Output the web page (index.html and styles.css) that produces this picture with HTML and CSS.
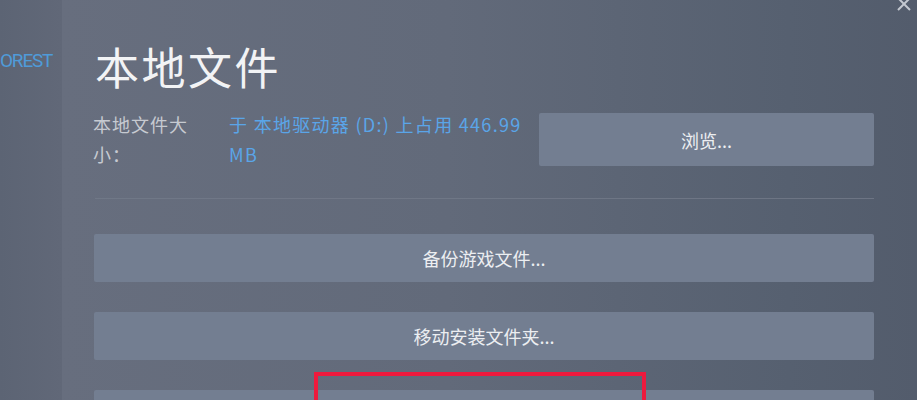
FILE: index.html
```html
<!DOCTYPE html>
<html lang="zh-CN">
<head>
<meta charset="utf-8">
<title>本地文件</title>
<link rel="stylesheet" href="styles.css">
</head>
<body>
<div class="window">
  <aside class="sidebar">
    <div class="game-name">OREST</div>
  </aside>
  <main class="panel">
    <h1 class="title">本地文件</h1>
    <div class="size-row">
      <div class="label">本地文件大小：</div>
      <div class="value">于 本地驱动器 (D:) 上占用 446.99 MB</div>
      <button class="btn btn-browse">浏览...</button>
    </div>
    <div class="divider"></div>
    <div class="actions">
      <button class="btn btn-wide">备份游戏文件...</button>
      <button class="btn btn-wide">移动安装文件夹...</button>
      <button class="btn btn-wide">&nbsp;</button>
    </div>
  </main>
  <div class="close">
    <svg width="16" height="16" viewBox="0 0 16 16"><path d="M2 -2 L14 10 M14 -2 L2 10" stroke="#c3c8d0" stroke-width="2" fill="none"/></svg>
  </div>
  <div class="highlight"></div>
</div>
</body>
</html>
```

FILE: styles.css
```css
html, body {
  margin: 0;
  padding: 0;
  width: 917px;
  height: 400px;
  overflow: hidden;
}
body {
  font-family: "Liberation Sans", "Noto Sans CJK SC", sans-serif;
  background: #5d6575;
}
.window {
  position: relative;
  display: flex;
  width: 917px;
  height: 400px;
  overflow: hidden;
}
.sidebar {
  width: 62px;
  flex: none;
  background: linear-gradient(90deg, #5c6474 0%, #616878 100%);
  overflow: hidden;
  padding-top: 50px;
  box-sizing: border-box;
}
.game-name {
  color: #4f9bd9;
  font-family: Roboto, "Liberation Sans", sans-serif;
  font-size: 19px;
  font-weight: normal;
  letter-spacing: -1.2px;
  white-space: nowrap;
  line-height: 22px;
}
.panel {
  flex: 1;
  padding: 40px 43px 0 32px;
  background: linear-gradient(90deg, #676e7e 0%, #626a7a 45%, #566070 85%, #535c6c 100%);
}
.title {
  margin: 0 0 17px 1px;
  font-family: "Noto Sans CJK SC", sans-serif;
  font-weight: normal;
  font-size: 44px;
  line-height: 52px;
  letter-spacing: 2.5px;
  color: #f2f3f5;
}
.size-row {
  display: grid;
  grid-template-columns: 100px 300px 1fr;
  column-gap: 35px;
  align-items: start;
}
.size-row .btn-browse {
  margin-left: -25px;
}
.label, .value {
  font-family: "Noto Sans CJK SC", sans-serif;
  font-size: 18px;
  line-height: 30px;
  letter-spacing: 1px;
}
.label {
  color: #c6cad1;
  margin-left: -1px;
}
.value {
  color: #5aa5e8;
  letter-spacing: 1.3px;
}
.btn {
  display: flex;
  align-items: center;
  justify-content: center;
  border: none;
  border-radius: 2px;
  background: #737e91;
  color: #eceef1;
  font-family: "Noto Sans CJK SC", sans-serif;
  font-size: 18px;
  padding: 0;
  cursor: pointer;
}
.btn-browse {
  height: 53px;
  margin-top: 4px;
}
.divider {
  height: 1px;
  background: #737a89;
  margin: 29px 0 35px 1px;
  opacity: 0.8;
}
.actions {
  display: flex;
  flex-direction: column;
  gap: 30px;
}
.btn-wide {
  width: 100%;
  height: 48px;
}
.close {
  position: absolute;
  top: 0;
  right: 5px;
  width: 16px;
  height: 14px;
}
.close svg {
  display: block;
}
.highlight {
  position: absolute;
  left: 314px;
  top: 372px;
  width: 324px;
  height: 60px;
  border: 4px solid #ee1a3d;
}
```
